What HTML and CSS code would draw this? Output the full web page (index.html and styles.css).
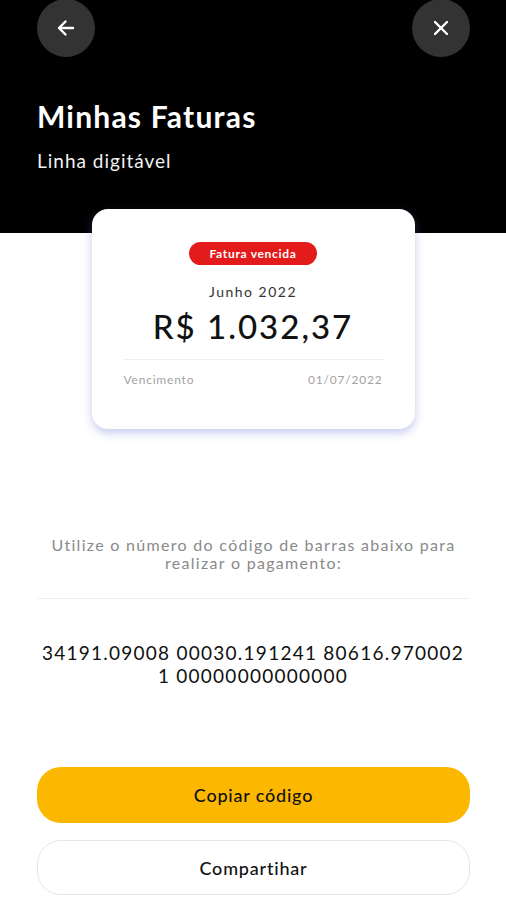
FILE: index.html
```html
<!DOCTYPE html>
<html lang="pt-BR">
<head>
  <meta charset="UTF-8" />
  <meta name="viewport" content="width=device-width, initial-scale=1.0"/>
  <title>Minhas Faturas</title>
  <link rel="stylesheet" href="styles.css">
</head>
<body>

  <div class="header">
    <div class="top-bar">
      <button class="round-btn" aria-label="Voltar">
        <svg width="20" height="20" viewBox="0 0 20 20" fill="none" stroke="#fff" stroke-width="2.4" stroke-linecap="round" stroke-linejoin="round">
          <path d="M17 10H3.5"/>
          <path d="M9.5 3.5L3 10l6.5 6.5"/>
        </svg>
      </button>
      <button class="round-btn" aria-label="Fechar">
        <svg width="18" height="18" viewBox="0 0 18 18" fill="none" stroke="#fff" stroke-width="2.4" stroke-linecap="round">
          <path d="M3 3l12 12"/>
          <path d="M15 3L3 15"/>
        </svg>
      </button>
    </div>
    <h1 class="title">Minhas Faturas</h1>
    <p class="subtitle">Linha digitável</p>
  </div>

  <div class="card">
    <span class="badge">Fatura vencida</span>
    <div class="month">Junho 2022</div>
    <div class="amount">R$ 1.032,37</div>
    <div class="due-row">
      <span>Vencimento</span>
      <span>01/07/2022</span>
    </div>
  </div>

  <p class="hint">Utilize o número do código de barras abaixo para<br>realizar o pagamento:</p>

  <div class="barcode">
    <span>34191.09008 00030.191241 80616.970002</span>
    <span>1 00000000000000</span>
  </div>

  <div class="actions">
    <button class="btn btn-primary">Copiar código</button>
    <button class="btn btn-outline">Compartihar</button>
  </div>

</body>
</html>
```

FILE: styles.css
```css
* {
  box-sizing: border-box;
  margin: 0;
  padding: 0;
  font-family: 'Lato', 'Noto Sans', sans-serif;
}

body {
  background: #fff;
  color: #111;
  width: 506px;
  overflow: hidden;
}

.header {
  background: #000;
  color: #fff;
  padding: 0 36px 61px 37px;
}

.top-bar {
  display: flex;
  justify-content: space-between;
  margin-top: -1px;
}

.round-btn {
  width: 58px;
  height: 58px;
  border-radius: 50%;
  border: none;
  background: #333;
  display: flex;
  align-items: center;
  justify-content: center;
}

.title {
  margin-top: 41px;
  font-size: 30px;
  line-height: 36px;
  font-weight: 700;
  letter-spacing: 1.2px;
}

.subtitle {
  margin-top: 15px;
  font-size: 19px;
  line-height: 23px;
  letter-spacing: 1px;
  color: #f2f2f2;
}

.card {
  width: 323px;
  margin: -24px auto 0;
  background: #fff;
  border-radius: 16px;
  padding: 33px 32px 42px;
  text-align: center;
  box-shadow: 0 4px 10px rgba(95, 105, 215, 0.35);
  position: relative;
}

.badge {
  display: inline-block;
  height: 23px;
  line-height: 23px;
  padding: 0 20px;
  border-radius: 12px;
  background: #e31b1b;
  color: #fff;
  font-size: 12px;
  font-weight: 700;
  letter-spacing: 0.7px;
}

.month {
  margin-top: 18px;
  font-size: 14px;
  line-height: 17px;
  letter-spacing: 1.5px;
  color: #333;
}

.amount {
  margin-top: 6px;
  font-size: 33px;
  line-height: 40px;
  font-weight: 500;
  letter-spacing: 2px;
  color: #111;
  padding-bottom: 13px;
  border-bottom: 1px solid #eee;
}

.due-row {
  display: flex;
  justify-content: space-between;
  margin-top: 13px;
  font-size: 12px;
  line-height: 14px;
  letter-spacing: 0.8px;
  color: #a3a3a3;
}

.hint {
  margin: 107px 36px 0 37px;
  padding-bottom: 26px;
  border-bottom: 1px solid #efefef;
  text-align: center;
  font-size: 16px;
  line-height: 18px;
  letter-spacing: 1.3px;
  color: #8a8a8a;
}

.barcode {
  display: flex;
  flex-direction: column;
  align-items: center;
  margin-top: 42px;
  font-size: 19px;
  line-height: 23px;
  letter-spacing: 1.25px;
  color: #111;
}

.actions {
  display: flex;
  flex-direction: column;
  gap: 17px;
  margin: 80px 36px 0 37px;
}

.btn {
  height: 56px;
  border-radius: 24px;
  font-size: 18px;
  font-weight: 500;
  letter-spacing: 0.8px;
  color: #111;
  cursor: pointer;
}

.btn-primary {
  background: #fcb800;
  border: none;
}

.btn-outline {
  height: 55px;
  background: #fff;
  border: 1px solid #e6e6e6;
}
```
